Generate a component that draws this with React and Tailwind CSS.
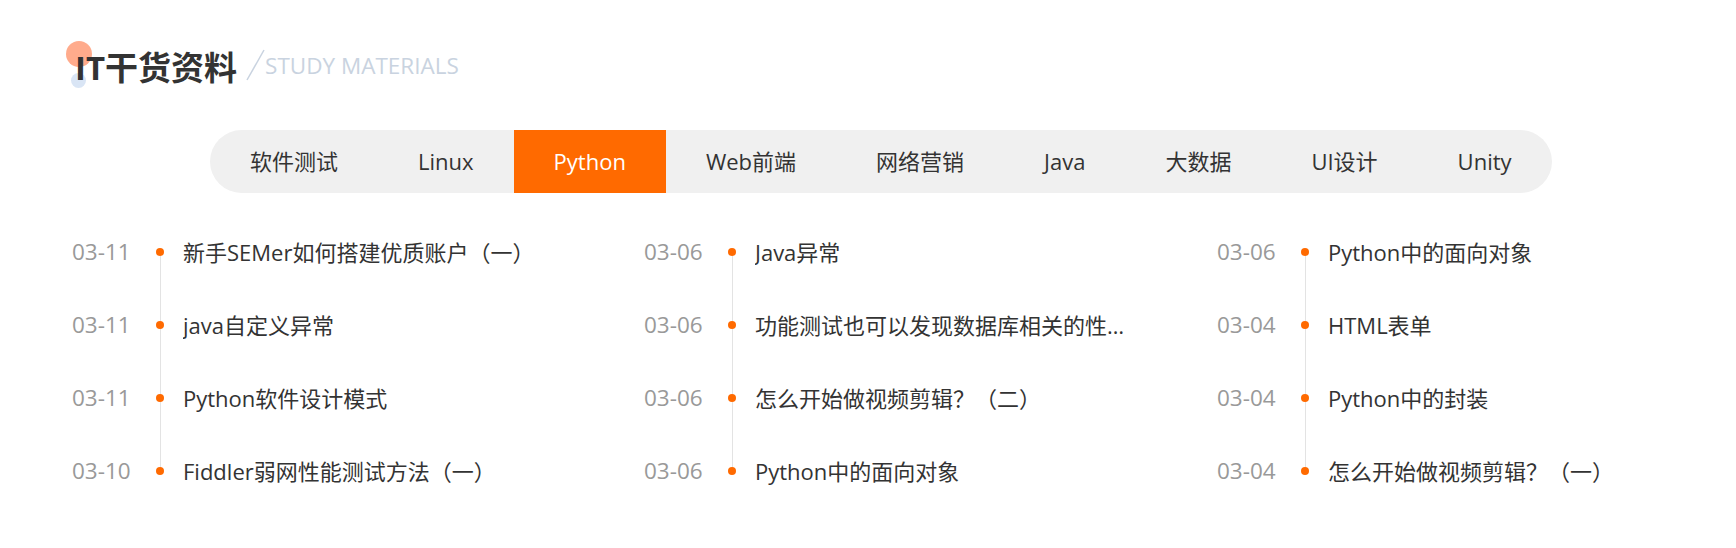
import React from 'react';

const tabs = ['软件测试', 'Linux', 'Python', 'Web前端', '网络营销', 'Java', '大数据', 'UI设计', 'Unity'];

const columns = [
  [
    { date: '03-11', title: '新手SEMer如何搭建优质账户（一）' },
    { date: '03-11', title: 'java自定义异常' },
    { date: '03-11', title: 'Python软件设计模式' },
    { date: '03-10', title: 'Fiddler弱网性能测试方法（一）' },
  ],
  [
    { date: '03-06', title: 'Java异常' },
    { date: '03-06', title: '功能测试也可以发现数据库相关的性能问题' },
    { date: '03-06', title: '怎么开始做视频剪辑？（二）' },
    { date: '03-06', title: 'Python中的面向对象' },
  ],
  [
    { date: '03-06', title: 'Python中的面向对象' },
    { date: '03-04', title: 'HTML表单' },
    { date: '03-04', title: 'Python中的封装' },
    { date: '03-04', title: '怎么开始做视频剪辑？（一）' },
  ],
];

const font = { fontFamily: '"Open Sans", "Noto Sans CJK SC", sans-serif' };

function Column({ items, width }) {
  return (
    <div className={`relative ${width}`}>
      {/* timeline line between first and last dot */}
      <div className="absolute left-[88px] top-[36px] bottom-[36px] w-px bg-[#e3e3e3]" />
      {items.map((it, i) => (
        <div key={i} className="relative flex items-center h-[73px]">
          <span className="w-[84px] text-[22.5px] text-[#999999] leading-[30px]">{it.date}</span>
          <span className="w-2 h-2 rounded-full bg-[#ff6a00] shrink-0" />
          <a href="#" className="ml-[19px] max-w-[372px] truncate text-[22px] leading-[30px] text-[#333333]">
            {it.title}
          </a>
        </div>
      ))}
    </div>
  );
}

export default function App() {
  const active = 'Python';
  return (
    <div className="w-[1736px] h-[548px] bg-white overflow-hidden" style={font}>
      {/* heading */}
      <div className="relative flex items-center h-[32px] mt-[51px] pl-[75px]">
        <span className="absolute left-[66px] top-[-10px] w-[26px] h-[26px] rounded-full bg-[#ffab8c]" />
        <span className="absolute left-[71px] top-[22px] w-[15px] h-[15px] rounded-full bg-[#d9e5f5]" />
        <h2 className="relative text-[33px] font-bold leading-none text-[#333333]">IT干货资料</h2>
        <svg className="ml-[9px] mt-[-4px]" width="19" height="32" viewBox="0 0 19 32">
          <line x1="18" y1="1" x2="1" y2="31" stroke="#c9d3e0" strokeWidth="1.5" />
        </svg>
        <span className="text-[22.5px] leading-none text-[#c9d3e0] mt-[-2px]">STUDY MATERIALS</span>
      </div>

      {/* tabs */}
      <div className="ml-[210px] mt-[47px] inline-flex h-[63px] rounded-full bg-[#f0f0f0] overflow-hidden">
        {tabs.map((t) => (
          <button
            key={t}
            className={`h-full px-[40px] text-[22px] ${
              t === active ? 'bg-[#ff6a00] text-white' : 'text-[#333333]'
            }`}
          >
            {t}
          </button>
        ))}
      </div>

      {/* article list */}
      <div className="flex pl-[72px] mt-[22px]">
        <Column items={columns[0]} width="w-[572px]" />
        <Column items={columns[1]} width="w-[573px]" />
        <Column items={columns[2]} width="w-[500px]" />
      </div>
    </div>
  );
}
